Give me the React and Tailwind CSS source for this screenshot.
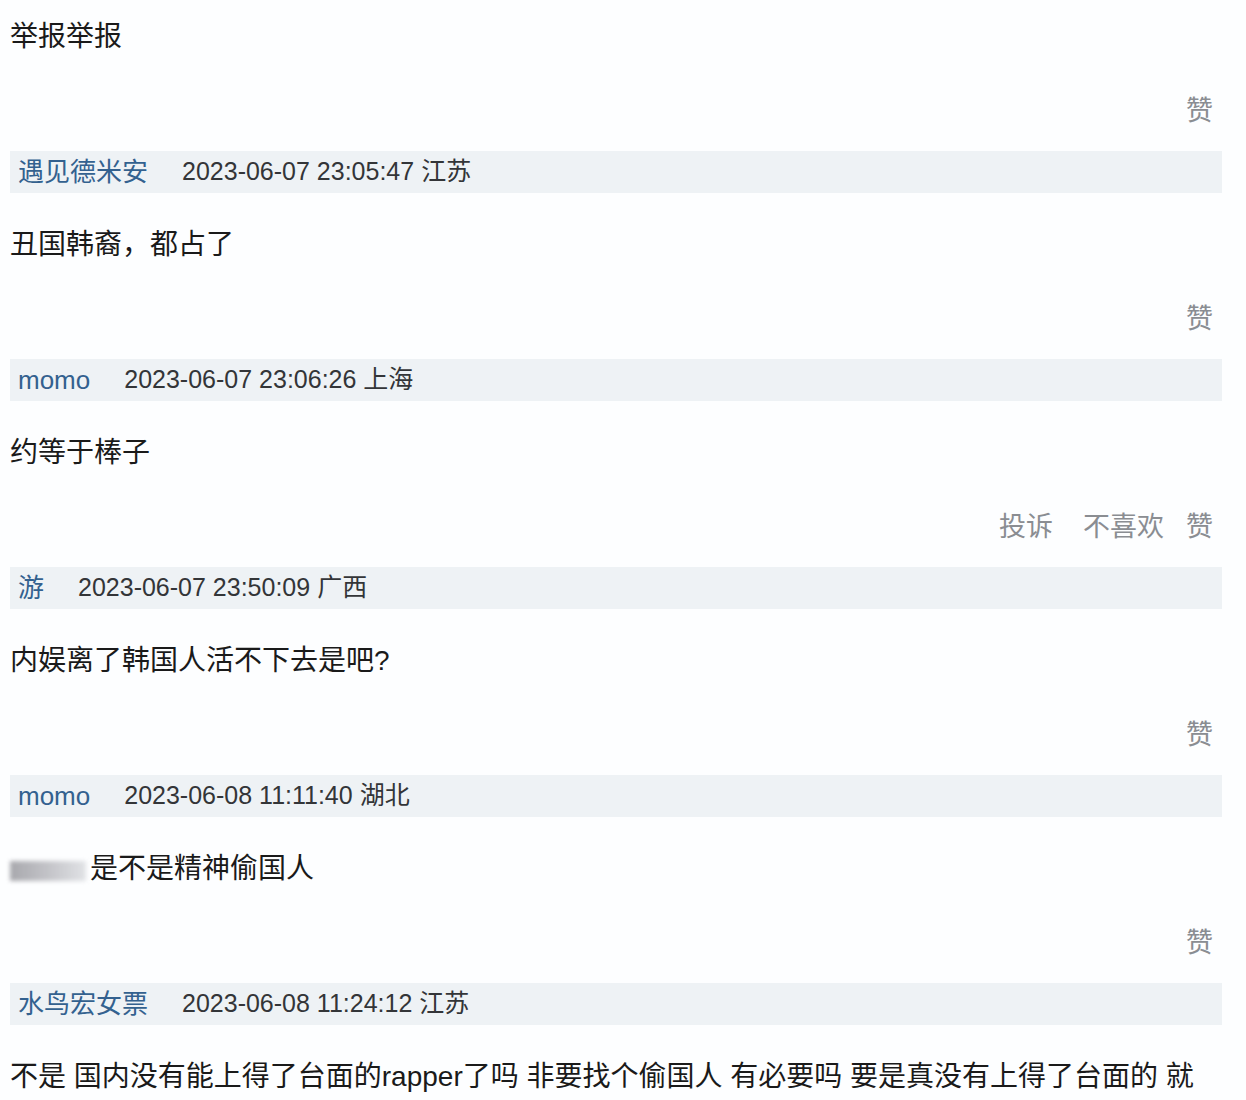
import React from 'react';

const comments = [
  { user: '遇见德米安', time: '2023-06-07 23:05:47', place: '江苏', text: '丑国韩裔，都占了' },
  { user: 'momo', time: '2023-06-07 23:06:26', place: '上海', text: '约等于棒子', extra: true },
  { user: '游', time: '2023-06-07 23:50:09', place: '广西', text: '内娱离了韩国人活不下去是吧?' },
  { user: 'momo', time: '2023-06-08 11:11:40', place: '湖北', text: '是不是精神偷国人', blurred: true },
  {
    user: '水鸟宏女票',
    time: '2023-06-08 11:24:12',
    place: '江苏',
    text: '不是 国内没有能上得了台面的rapper了吗 非要找个偷国人 有必要吗 要是真没有上得了台面的 就',
    last: true,
  },
];

function Actions({ extra }) {
  return (
    <div className="mt-[40px] h-[32px] flex items-center justify-end pr-[9px] text-[27px] text-[#8a8d92] leading-[32px]">
      {extra && (
        <>
          <span>投诉</span>
          <span className="ml-[30px]">不喜欢</span>
        </>
      )}
      <span className={extra ? 'ml-[22px]' : ''}>赞</span>
    </div>
  );
}

function CommentText({ children, blurred }) {
  return (
    <div className="mt-[34px] text-[28px] leading-[36px] text-[#1a1a1a] whitespace-nowrap">
      {blurred && (
        <span className="inline-block align-middle w-[76px] h-[20px] mr-[4px] bg-gradient-to-r from-[#8c8c92] via-[#b0b0b6] to-[#d8dade] blur-[2px] opacity-75"></span>
      )}
      {children}
    </div>
  );
}

export default function App() {
  return (
    <div
      className="w-[1246px] h-[1100px] overflow-hidden bg-[#fdfeff]"
      style={{ fontFamily: "'Liberation Sans', 'Noto Sans CJK SC', sans-serif" }}
    >
      <div className="w-[1212px] ml-[10px] pt-[19px]">
        <div className="text-[28px] leading-[36px] text-[#1a1a1a]">举报举报</div>
        <Actions />
        {comments.map((c, i) => (
          <div key={i} className="mt-[24px]">
            <div className="h-[42px] bg-[#eef2f5] flex items-center pl-[8px] gap-[34px]">
              <span className="text-[26px] text-[#33618f]">{c.user}</span>
              <span className="text-[25px] text-[#333538]">
                {c.time} {c.place}
              </span>
            </div>
            <CommentText blurred={c.blurred}>{c.text}</CommentText>
            {!c.last && <Actions extra={c.extra} />}
          </div>
        ))}
      </div>
    </div>
  );
}
